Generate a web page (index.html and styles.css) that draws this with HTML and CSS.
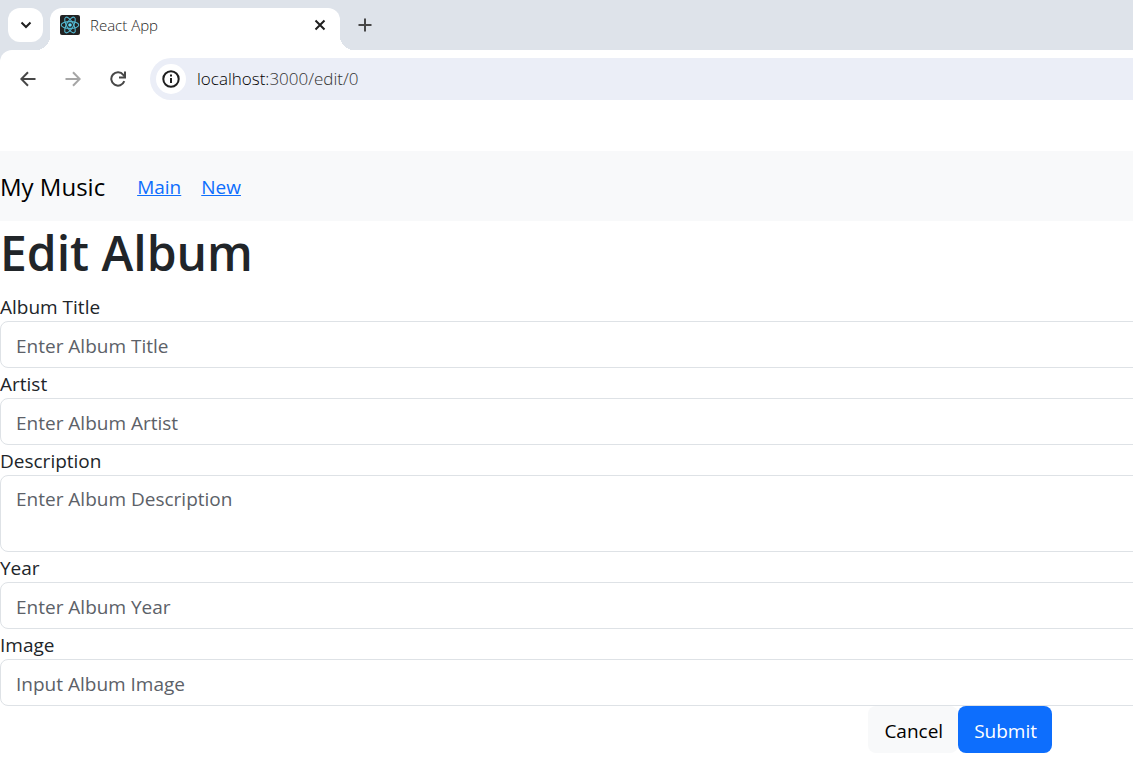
FILE: index.html
```html
<!DOCTYPE html>
<html lang="en">
<head>
<meta charset="utf-8">
<meta name="viewport" content="width=device-width, initial-scale=1">
<title>React App</title>
<link rel="stylesheet" href="styles.css">
</head>
<body>
<header class="browser">
  <div class="tab-strip">
    <button class="tab-search" type="button" aria-label="Search tabs">
      <svg width="14" height="14" viewBox="0 0 14 14"><path d="M2.500 4.500 7 9l4.500-4.500" fill="none" stroke="#1f1f1f" stroke-width="2"/></svg>
    </button>
    <div class="tab">
      <svg width="20" height="20" viewBox="0 0 20 20" fill="none" stroke="#53b7d0" stroke-width="1.100">
        <rect width="20" height="20" rx="2" fill="#222" stroke="none"/>
        <ellipse cx="10" cy="10" rx="8.800" ry="3.400"/>
        <ellipse cx="10" cy="10" rx="8.800" ry="3.400" transform="rotate(60 10 10)"/>
        <ellipse cx="10" cy="10" rx="8.800" ry="3.400" transform="rotate(120 10 10)"/>
        <circle cx="10" cy="10" r="1.800" fill="#61dafb" stroke="none"/>
      </svg>
      <span class="tab-title">React App</span>
      <button class="icon-button" type="button" aria-label="Close tab">
        <svg width="12" height="12" viewBox="0 0 12 12"><path d="m1.500 1.500 9 9m0-9-9 9" stroke="#1f1f1f" stroke-width="2"/></svg>
      </button>
    </div>
    <button class="icon-button new-tab" type="button" aria-label="New tab">
      <svg width="14" height="14" viewBox="0 0 14 14"><path d="M7 .5v13M.5 7h13" stroke="#474747" stroke-width="2"/></svg>
    </button>
  </div>
  <div class="toolbar">
    <button class="icon-button" type="button" aria-label="Back">
      <svg width="16" height="16" viewBox="0 0 16 16"><path d="M15.500 8H2M8 1.200 1.300 8 8 14.800" fill="none" stroke="#474747" stroke-width="2"/></svg>
    </button>
    <button class="icon-button" type="button" aria-label="Forward">
      <svg width="16" height="16" viewBox="0 0 16 16"><path d="M.5 8H14M8 1.200 14.700 8 8 14.800" fill="none" stroke="#a6a6a6" stroke-width="2"/></svg>
    </button>
    <button class="icon-button" type="button" aria-label="Reload">
      <svg width="16" height="16" viewBox="0 0 16 16"><path d="M14.300 10.200A6.700 6.700 0 1 1 13.300 3.800L14.600 5.400" fill="none" stroke="#474747" stroke-width="2"/><path d="M15 .5v6H9" fill="none" stroke="#474747" stroke-width="2"/></svg>
    </button>
    <div class="address">
      <button class="site-info" type="button" aria-label="Site information">
        <svg width="18" height="18" viewBox="0 0 18 18"><circle cx="9" cy="9" r="7.700" fill="none" stroke="#1f1f1f" stroke-width="2"/><path d="M9 8v5M9 4.500v2" stroke="#1f1f1f" stroke-width="2"/></svg>
      </button>
      <span class="url"><span class="host">localhost:</span>3000/edit/0</span>
    </div>
  </div>
</header>
<nav class="navbar">
  <span class="brand">My Music</span>
  <a href="#main">Main</a>
  <a href="#new">New</a>
</nav>
<main>
  <h1>Edit Album</h1>
  <form>
    <label for="title">Album Title</label>
    <input class="field" id="title" type="text" placeholder="Enter Album Title">
    <label for="artist">Artist</label>
    <input class="field" id="artist" type="text" placeholder="Enter Album Artist">
    <label for="description">Description</label>
    <textarea class="field" id="description" rows="2" placeholder="Enter Album Description"></textarea>
    <label for="year">Year</label>
    <input class="field" id="year" type="text" placeholder="Enter Album Year">
    <label for="image">Image</label>
    <input class="field" id="image" type="text" placeholder="Input Album Image">
    <div class="actions">
      <button class="btn btn-light" type="button">Cancel</button>
      <button class="btn btn-primary" type="submit">Submit</button>
    </div>
  </form>
</main>
</body>
</html>
```
FILE: styles.css
```css
* { box-sizing: border-box; }

body {
  margin: 0;
  overflow-x: hidden;
  background: #fff;
  color: #212529;
  font: 19px/30px "Segoe UI", "Open Sans", sans-serif;
}

button {
  border: 0;
  padding: 0;
  background: none;
  font: inherit;
}

svg { display: block; flex: none; }

.browser {
  margin-bottom: 43px;
  background: #dee3ea;
}

.tab-strip {
  display: flex;
  padding: 8px 8px 0;
}

.tab-search {
  display: grid;
  place-items: center;
  width: 35px;
  height: 34px;
  border-radius: 12px;
  background: #fff;
}

.tab {
  position: relative;
  display: flex;
  align-items: center;
  gap: 10px;
  width: 290px;
  height: 42px;
  margin-left: 7px;
  padding: 0 10px 8px;
  border-radius: 12px 12px 0 0;
  background: #fff;
}

.tab::before,
.tab::after {
  content: "";
  position: absolute;
  bottom: 0;
  width: 14px;
  height: 14px;
}

.tab::before {
  right: 100%;
  background: radial-gradient(circle at 0 0, transparent 14px, #fff 14px);
}

.tab::after {
  left: 100%;
  background: radial-gradient(circle at 100% 0, transparent 14px, #fff 14px);
}

.tab-title {
  flex: 1;
  color: #1f1f1f;
  font-size: 15px;
  font-weight: 300;
  line-height: 20px;
}

.icon-button {
  display: grid;
  place-items: center;
  width: 20px;
  height: 20px;
}

.new-tab { margin: 7px 0 0 15px; }

.toolbar {
  display: flex;
  align-items: center;
  gap: 25px;
  padding: 8px 0 8px 18px;
  border-radius: 12px 0 0;
  background: #fff;
}

.address {
  display: flex;
  flex: 1;
  align-items: center;
  gap: 11px;
  height: 42px;
  margin-left: -3px;
  padding-left: 6px;
  border-radius: 21px 0 0 21px;
  background: #ebeef7;
}

.site-info {
  display: grid;
  place-items: center;
  width: 30px;
  height: 30px;
  border-radius: 50%;
  background: #fff;
}

.url {
  color: #333;
  font-size: 17px;
  font-weight: 300;
}

.host { color: #000; }

.navbar {
  display: flex;
  align-items: center;
  gap: 20px;
  padding: 18px 0 16px;
  background: #f8f9fa;
  line-height: 36px;
}

.brand {
  margin-right: 12px;
  color: #000;
  font-size: 24px;
}

.navbar a { color: #0d6efd; }

h1 {
  margin: 0 0 10px;
  padding-top: 4px;
  font-size: 48px;
  font-weight: 600;
  line-height: 56px;
}

label {
  display: block;
  padding-top: 2px;
  line-height: 28px;
}

.field {
  display: block;
  width: calc(100% + 16px);
  padding: 9px 15px 7px;
  border: 1px solid #dee2e6;
  border-radius: 8px;
  background: #fff;
  color: #212529;
  font: inherit;
  line-height: 29px;
  resize: none;
}

input.field { height: 47px; }
textarea.field { height: 77px; }
.field::placeholder { color: #5c6168; opacity: 1; }

.actions {
  display: flex;
  justify-content: flex-end;
  padding-right: 81px;
}

.btn {
  padding: 10px 15px 7px 16px;
  border-radius: 8px;
}

.btn-light { background: #f8f9fa; color: #000; }
.btn-primary { background: #0d6efd; color: #fff; }
```
